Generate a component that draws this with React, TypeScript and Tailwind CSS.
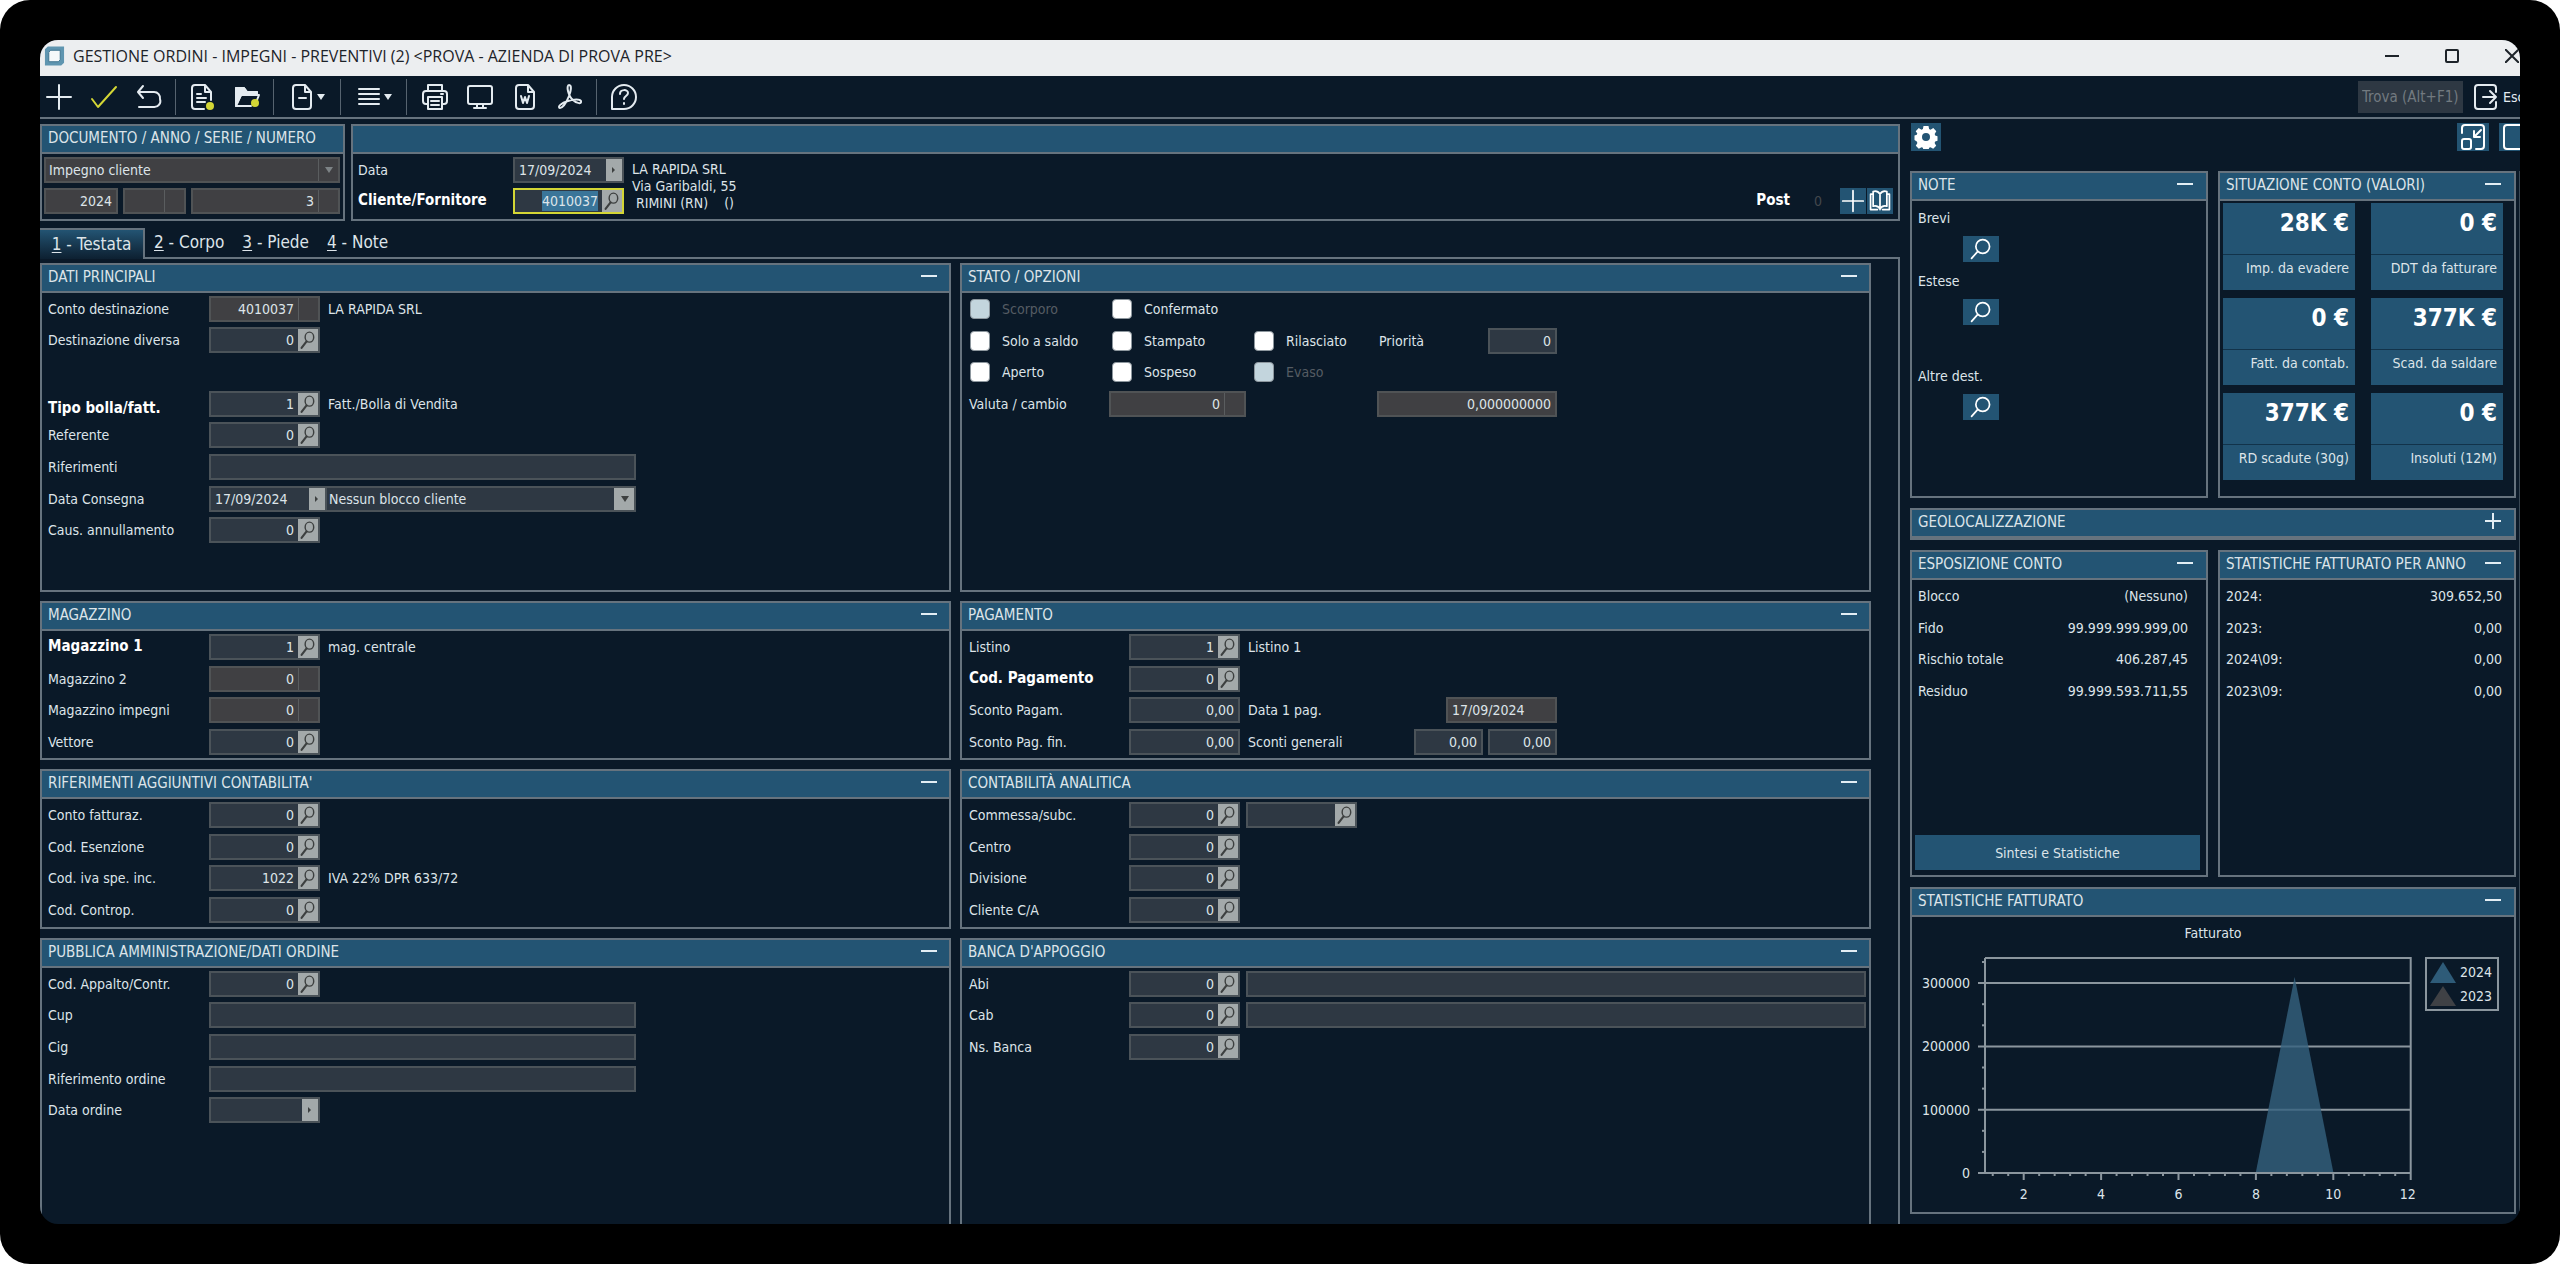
import { useEffect, useId, useRef } from "react";
import type { ReactNode } from "react";
import clsx from "clsx";

const YEARS = [
  { label: "2024:", value: "309.652,50" },
  { label: "2023:", value: "0,00" },
  { label: "2024\\09:", value: "0,00" },
  { label: "2023\\09:", value: "0,00" },
];

const EXPOSURE = [
  { label: "Blocco", value: "(Nessuno)" },
  { label: "Fido", value: "99.999.999.999,00" },
  { label: "Rischio totale", value: "406.287,45" },
  { label: "Residuo", value: "99.999.593.711,55" },
];

const TILES = [
  { value: "28K €", label: "Imp. da evadere" },
  { value: "0 €", label: "DDT da fatturare" },
  { value: "0 €", label: "Fatt. da contab." },
  { value: "377K €", label: "Scad. da saldare" },
  { value: "377K €", label: "RD scadute (30g)" },
  { value: "0 €", label: "Insoluti (12M)" },
];

const TABS = ["Testata", "Corpo", "Piede", "Note"];

function Svg({ children, className = "h-7 w-7" }: { children: ReactNode; className?: string }) {
  return (
    <svg
      viewBox="0 0 28 28"
      className={clsx("shrink-0", className)}
      fill="none"
      stroke="currentColor"
      strokeWidth="2"
      strokeLinecap="round"
      strokeLinejoin="round"
      aria-hidden="true"
    >
      {children}
    </svg>
  );
}

function Lens({ className }: { className?: string }) {
  return (
    <Svg className={className}>
      <ellipse cx="16" cy="10" rx="6" ry="7" />
      <path d="M12 16 5 25" strokeWidth="3" />
    </Svg>
  );
}

// Small square button glued to the right edge of a field.
function FieldButton({ kind, label }: { kind: "lens" | "date"; label: string }) {
  return (
    <button
      aria-label={label}
      className={clsx(
        "flex shrink-0 items-center justify-center bg-[#a3a9aa] text-[#3d4040]",
        kind === "lens" ? "w-5" : "w-4"
      )}
    >
      {kind === "lens" ? (
        <Lens className="h-5 w-5" />
      ) : (
        <svg viewBox="0 0 6 8" className="h-2 w-[6px]" fill="currentColor" aria-hidden="true">
          <path d="M1 1 4 4 1 7z" />
        </svg>
      )}
    </button>
  );
}

type FieldProps = {
  id?: string;
  name?: string;
  value?: string;
  kind?: "text" | "lens" | "date" | "locked" | "lockedText";
  left?: boolean;
  width?: string;
};

function Field({ id, name, value = "", kind = "text", left, width = "w-[111px]" }: FieldProps) {
  const locked = kind === "locked" || kind === "lockedText";
  return (
    <div
      className={clsx(
        "flex h-[26px] border-2",
        width,
        locked ? "border-[#505355] bg-[#404043]" : "border-[#4b5359] bg-[#2e3843]"
      )}
    >
      <input
        id={id}
        aria-label={name}
        defaultValue={value}
        readOnly={locked}
        className={clsx(
          "w-full min-w-0 flex-1 bg-transparent outline-none",
          left ? "pl-1 text-left" : "pr-1 text-right"
        )}
      />
      {kind === "lens" && <FieldButton kind="lens" label={`Cerca ${name ?? ""}`} />}
      {kind === "date" && <FieldButton kind="date" label={`Calendario ${name ?? ""}`} />}
      {kind === "locked" && <span className="w-5 shrink-0 border-l border-[#5a5d5f]" />}
    </div>
  );
}

// One line of the form: label, main field, then whatever follows it.
function Row({
  label,
  bold,
  low,
  labelWidth = "w-[161px]",
  children,
  ...field
}: FieldProps & {
  label: string;
  bold?: boolean;
  low?: boolean;
  labelWidth?: string;
  children?: ReactNode;
}) {
  const id = useId();
  return (
    <div className="flex items-center">
      <label
        htmlFor={id}
        className={clsx(
          "flex h-full shrink-0",
          labelWidth,
          low ? "items-end" : "items-center",
          bold && "text-[15px] font-bold text-white"
        )}
      >
        {label}
      </label>
      <Field id={id} name={label} {...field} />
      {children}
    </div>
  );
}

function Panel({
  title,
  className,
  closed,
  control = "pr-3",
  children,
}: {
  title: string;
  className?: string;
  closed?: boolean;
  control?: string;
  children?: ReactNode;
}) {
  return (
    <section className={clsx("flex flex-col border-2 border-[#66737e]", className)}>
      <header
        className={clsx(
          "flex h-[28px] shrink-0 items-center justify-between border-b-2 border-[#66737e] bg-[#235473] pl-[6px]",
          control
        )}
      >
        <h2 className="whitespace-nowrap text-[15px]">{title}</h2>
        <button aria-label={closed ? "Espandi" : "Riduci"} className="mb-1 text-[#e3eef4]">
          <svg viewBox="0 0 16 16" className="h-4 w-4" stroke="currentColor" strokeWidth="2" aria-hidden="true">
            <path d={closed ? "M0 8h16M8 0v16" : "M0 8h16"} />
          </svg>
        </button>
      </header>
      {children}
    </section>
  );
}

function Check({ label, disabled }: { label: string; disabled?: boolean }) {
  return (
    <label className={clsx("flex items-center gap-3", disabled && "text-[#555c63]")}>
      <input
        type="checkbox"
        disabled={disabled}
        className={clsx(
          "h-5 w-5 appearance-none rounded-[4px] border border-[#8d979e]",
          disabled ? "bg-[#c3d5dd]" : "bg-white"
        )}
      />
      {label}
    </label>
  );
}

function Toolbar() {
  const button = "flex h-full items-center";
  const sep = "h-9 w-px bg-[#56636f]";
  return (
    <div className="flex h-[43px] shrink-0 items-center justify-between border-b-2 border-[#66737e] text-[#e4ebf0]">
      <div className="flex h-full items-center pl-[5px]">
        <button aria-label="Nuovo" className={clsx(button, "mr-[17px]")}>
          <Svg><path d="M14 2v24M2 14h24" /></Svg>
        </button>
        <button aria-label="Conferma" className={clsx(button, "mr-[17px] text-[#d3d635]")}>
          <Svg><path d="m2 16 6 8L26 4" /></Svg>
        </button>
        <button aria-label="Ripristina" className={clsx(button, "mr-3")}>
          <Svg><path d="M8 3 3 9l5 6M3 9h16a6 6 0 0 1 6 7 6 6 0 0 1-6 8H4" /></Svg>
        </button>
        <span className={sep} />
        <button aria-label="Documento" className={clsx(button, "ml-3 mr-[17px]")}>
          <Svg>
            <path d="M16 26H7a3 3 0 0 1-3-3V5a3 3 0 0 1 3-3h10l6 7v8M17 2v7h6M9 11h4M9 15h9M9 19h8" />
            <circle cx="22" cy="23" r="4" fill="#d3d635" stroke="none" />
          </Svg>
        </button>
        <button aria-label="Apri cartella" className={clsx(button, "mr-3")}>
          <Svg>
            <path d="M3 23V5h8l3 4h10v3" />
            <path d="M3 5h8l3 4h10v3H8L4 20z" fill="currentColor" />
            <path d="m8 12-5 11h15M8 12h18l-2 5" />
            <circle cx="22" cy="20" r="4" fill="#d3d635" stroke="none" />
          </Svg>
        </button>
        <span className={sep} />
        <button aria-label="Azioni documento" className={clsx(button, "ml-[14px] mr-[15px]")}>
          <Svg><path d="M17 2H8a3 3 0 0 0-3 3v18a3 3 0 0 0 3 3h12a3 3 0 0 0 3-3V9zM17 2v7h6M11 15h7" /></Svg>
          <Caret />
        </button>
        <span className={sep} />
        <button aria-label="Menu" className={clsx(button, "ml-[14px] mr-[14px]")}>
          <Svg><path d="M4 6h20M4 11h20M4 16h20M4 21h20" /></Svg>
          <Caret />
        </button>
        <span className={sep} />
        <button aria-label="Stampa" className={clsx(button, "ml-[14px] mr-[17px]")}>
          <Svg>
            <path d="M7 8V2h14v6M7 21H5a3 3 0 0 1-3-3v-7a3 3 0 0 1 3-3h18a3 3 0 0 1 3 3v7a3 3 0 0 1-3 3h-2" />
            <path d="M7 14h14v12H7zM10 18h8M10 22h8M20 11h2" />
          </Svg>
        </button>
        <button aria-label="Anteprima" className={clsx(button, "mr-[17px]")}>
          <Svg><path d="M4 3h20a2 2 0 0 1 2 2v14a2 2 0 0 1-2 2H4a2 2 0 0 1-2-2V5a2 2 0 0 1 2-2zM11 21v4M17 21v4M8 25h12" /></Svg>
        </button>
        <button aria-label="Word" className={clsx(button, "mr-[17px]")}>
          <Svg>
            <path d="M17 2H8a3 3 0 0 0-3 3v18a3 3 0 0 0 3 3h12a3 3 0 0 0 3-3V9zM17 2v7h6" />
            <path d="m10 13 2 7 2-6 2 6 2-7" />
          </Svg>
        </button>
        <button aria-label="Pdf" className={clsx(button, "mr-3")}>
          <Svg>
            <path d="M13 2c3 0 2 6 0 11-2 5-6 12-9 12-3-1 1-5 8-7 6-2 12-2 13 0 1 3-4 3-8-1-5-4-7-15-4-15z" />
          </Svg>
        </button>
        <span className={sep} />
        <button aria-label="Aiuto" className={clsx(button, "ml-[13px]")}>
          <Svg>
            <path d="M2 26V14A12 12 0 1 1 14 26z" />
            <path d="M10 11c0-5 8-5 8-1 0 3-4 3-4 6M14 20v1" />
          </Svg>
        </button>
      </div>
      <div className="flex w-[162px] shrink-0 items-center overflow-hidden">
        <input
          aria-label="Trova"
          placeholder="Trova (Alt+F1)"
          className="h-8 w-[105px] shrink-0 bg-[#2e3843] px-1 text-[15px] outline-none placeholder:text-[#727a80]"
        />
        <button className="ml-[9px] flex items-center gap-[3px] whitespace-nowrap">
          <Svg>
            <path d="M24 9V5a3 3 0 0 0-3-3H6a3 3 0 0 0-3 3v18a3 3 0 0 0 3 3h15a3 3 0 0 0 3-3v-4M11 14h13M18 8l6 6-6 6" />
          </Svg>
          Esci
        </button>
      </div>
    </div>
  );
}

function Caret() {
  return (
    <svg viewBox="0 0 8 6" className="ml-px h-[6px] w-2" fill="currentColor" aria-hidden="true">
      <path d="M0 0h8L4 6z" />
    </svg>
  );
}

function Tile({ value, label }: { value: string; label: string }) {
  return (
    <button className="flex h-[87px] flex-col bg-[#235473] text-right">
      <span className="flex h-[52px] w-full justify-end border-b border-[#12334a] pr-[6px] pt-1 text-2xl font-bold text-white">
        {value}
      </span>
      <span className="w-full pr-[6px] pt-[3px]">{label}</span>
    </button>
  );
}

function NoteItem({ label, height }: { label: string; height: string }) {
  return (
    <div className={height}>
      <div className="h-[26px] leading-[26px]">{label}</div>
      <button aria-label={`Cerca ${label}`} className="ml-[45px] mt-[5px] flex h-[26px] w-9 items-center justify-center bg-[#235473] text-white">
        <Svg className="h-6 w-6">
          <ellipse cx="16" cy="11" rx="8" ry="8" />
          <path d="M10 17 3 25" />
        </Svg>
      </button>
    </div>
  );
}

function Chart() {
  // x: months 1..12, y: 0..340000
  const x = (m: number) => 73 + (m - 1) * 38.7;
  const y = (v: number) => 256 - v * 0.000633;
  const minorX = Array.from({ length: 27 }, (_, i) => 1.2 + i * 0.4).filter((m) => Math.abs(m % 2) > 0.01);
  const minorY = [1, 2, 4, 5, 7, 8, 10].map((n) => (n * 100000) / 3);
  return (
    <svg viewBox="0 0 602 294" className="w-full" aria-label="Fatturato">
      <g fill="#dde4e9" fontSize="14">
        <text x="301" y="21" textAnchor="middle">Fatturato</text>
        {[0, 100000, 200000, 300000].map((v) => (
          <text key={v} x="58" y={y(v) + 5} textAnchor="end">{v}</text>
        ))}
        {[2, 4, 6, 8, 10, 12].map((m) => (
          <text key={m} x={m === 12 ? x(m) - 3 : x(m)} y="282" textAnchor="middle">{m}</text>
        ))}
        <text x="548" y="60">2024</text>
        <text x="548" y="84">2023</text>
      </g>
      <g stroke="#8b969e" strokeWidth="2" fill="none">
        {[100000, 200000, 300000].map((v) => (
          <path key={v} d={`M66 ${y(v)}H${x(12)}`} />
        ))}
        <path d={`M73 41H${x(12)}V263M73 41V256M66 256H${x(12)}`} />
        {[2, 4, 6, 8, 10].map((m) => (
          <path key={m} d={`M${x(m)} 256v7`} />
        ))}
        {minorX.map((m) => (
          <path key={m} d={`M${x(m)} 256v3`} />
        ))}
        {minorY.map((v) => (
          <path key={v} d={`M70 ${y(v)}h3`} />
        ))}
        <rect x="514" y="41" width="72" height="52" />
      </g>
      <path d={`M${x(8)} 255 ${x(9)} ${y(309652)} ${x(10)} 255z`} fill="#34617e" fillOpacity="0.8" />
      <path d="M518 66 531 45 544 66z" fill="#2e5b78" />
      <path d="M518 89 531 69 544 89z" fill="#3f4145" />
    </svg>
  );
}

function Sidebar() {
  const blue = "flex h-[28px] items-center justify-center bg-[#235473] text-white";
  return (
    <aside className="flex w-[610px] shrink-0 flex-col pt-1">
      <div className="flex h-12 shrink-0 items-start justify-between">
        <button aria-label="Impostazioni" className={clsx(blue, "ml-px w-[30px]")}>
          <svg viewBox="0 0 24 24" className="h-6 w-6" fill="currentColor" fillRule="evenodd" aria-hidden="true">
            <path d="M9.5 1h5l.6 3 1.4.7 2.8-1.6 3 3.2-1.6 2.8.5 1.4 2.3.8v4.4l-2.3.8-.6 1.4 1.6 2.8-3 3.1-2.7-1.6-1.4.6-.6 2.8h-5l-.6-2.8-1.4-.6-2.7 1.6-3-3.1 1.6-2.8-.6-1.4L.5 15v-4.400l2.300-.8.5-1.400L1.700 6.300l3-3.200 2.800 1.600L8.900 4zM12 8a4 4 0 1 0 0 8 4 4 0 0 0 0-8z" />
          </svg>
        </button>
        <div className="flex w-[63px] gap-[10px] overflow-hidden">
          <button aria-label="Riduci finestra" className={clsx(blue, "w-8 shrink-0")}>
            <Svg>
              <path d="M3 10V5a3 3 0 0 1 3-3h16a3 3 0 0 1 3 3v18a3 3 0 0 1-3 3h-5M22 7l-7 7M15 8v6h6" />
              <rect x="3" y="16" width="9" height="10" rx="2" />
            </Svg>
          </button>
          <button aria-label="Pannello" className={clsx(blue, "w-8 shrink-0")}>
            <Svg><rect x="3" y="2" width="22" height="24" rx="3" /></Svg>
          </button>
        </div>
      </div>
      <div className="flex flex-1 flex-col gap-[10px] border-r border-[#3a4854] pr-[3px]">
        <div className="grid grid-cols-2 gap-[10px]">
          <Panel title="NOTE" className="h-[327px]" control="pr-[13px]">
            <div className="px-[6px] pt-1">
              <NoteItem label="Brevi" height="h-[63px]" />
              <NoteItem label="Estese" height="h-[95px]" />
              <NoteItem label="Altre dest." height="h-[63px]" />
            </div>
          </Panel>
          <Panel title="SITUAZIONE CONTO (VALORI)" className="h-[327px]" control="pr-[13px]">
            <div className="grid grid-cols-2 gap-x-4 gap-y-2 pl-[3px] pr-[11px] pt-[2px]">
              {TILES.map((t) => (
                <Tile key={t.label} {...t} />
              ))}
            </div>
          </Panel>
        </div>
        <Panel title="GEOLOCALIZZAZIONE" className="h-8" closed control="pr-[13px]" />
        <div className="grid grid-cols-2 gap-[10px]">
          <Panel title="ESPOSIZIONE CONTO" className="h-[327px]" control="pr-[13px]">
            <dl className="grid h-[127px] grid-rows-4 pl-[6px] pr-[18px]">
              {EXPOSURE.map((e) => (
                <div key={e.label} className="flex items-center justify-between">
                  <dt>{e.label}</dt>
                  <dd>{e.value}</dd>
                </div>
              ))}
            </dl>
            <button className="mb-[5px] ml-[3px] mr-[6px] mt-auto h-[35px] bg-[#235473]">Sintesi e Statistiche</button>
          </Panel>
          <Panel title="STATISTICHE FATTURATO PER ANNO" className="h-[327px]" control="pr-[13px]">
            <dl className="grid h-[127px] grid-rows-4 pl-[6px] pr-3">
              {YEARS.map((e) => (
                <div key={e.label} className="flex items-center justify-between">
                  <dt>{e.label}</dt>
                  <dd>{e.value}</dd>
                </div>
              ))}
            </dl>
          </Panel>
        </div>
        <Panel title="STATISTICHE FATTURATO" className="h-[327px]" control="pr-[13px]">
          <Chart />
        </Panel>
      </div>
    </aside>
  );
}

function DocumentHeader() {
  const customer = useRef<HTMLInputElement>(null);

  useEffect(() => {
    customer.current?.focus({ preventScroll: true });
    customer.current?.select();
  }, []);

  return (
    <div className="flex h-[97px] gap-[6px]">
      <section className="w-[305px] shrink-0 border-2 border-[#66737e]">
        <h2 className="flex h-[28px] items-center border-b-2 border-[#66737e] bg-[#235473] pl-[6px] text-[15px]">
          DOCUMENTO / ANNO / SERIE / NUMERO
        </h2>
        <div className="flex flex-col gap-[5px] pl-[2px] pr-[3px] pt-[3px]">
          <div className="flex h-[26px] border-2 border-[#505355] bg-[#404043]">
            <select aria-label="Tipo documento" className="min-w-0 flex-1 appearance-none bg-transparent pl-[3px] outline-none">
              <option>Impegno cliente</option>
            </select>
            <span className="flex w-5 items-center justify-center border-l border-[#5a5d5f] text-[#7d8386]">
              <Caret />
            </span>
          </div>
          <div className="flex gap-[5px]">
            <Field name="Anno" value="2024" kind="lockedText" width="w-[74px]" />
            <Field name="Serie" kind="locked" width="w-[63px]" />
            <Field name="Numero" value="3" kind="locked" width="flex-1 min-w-0" />
          </div>
        </div>
      </section>

      <section className="flex-1 border-2 border-[#66737e]">
        <div className="h-[28px] border-b-2 border-[#66737e] bg-[#235473]" />
        <div className="flex justify-between pl-[5px] pr-[5px] pt-[3px]">
          <div className="flex">
            <div className="flex flex-col gap-[5px]">
              <Row label="Data" labelWidth="w-[155px]" value="17/09/2024" kind="date" left />
              <div className="flex items-center">
                <label htmlFor="cliente" className="w-[155px] text-[15px] font-bold text-white">Cliente/Fornitore</label>
                <div className="flex h-[26px] w-[111px] border-2 border-[#d3d635] bg-[#2e3843]">
                  <input
                    id="cliente"
                    ref={customer}
                    defaultValue="4010037"
                    className="w-full min-w-0 flex-1 bg-transparent pr-1 text-right outline-none selection:bg-[#3a7599] selection:text-[#dde4e9]"
                  />
                  <FieldButton kind="lens" label="Cerca cliente" />
                </div>
              </div>
            </div>
            <address className="ml-2 flex flex-col pt-1 not-italic leading-[17px]">
              <span>LA RAPIDA SRL</span>
              <span>Via Garibaldi, 55</span>
              <span className="flex gap-4 pl-1">
                <span>RIMINI (RN)</span>
                <span>()</span>
              </span>
            </address>
          </div>
          <div className="flex h-[26px] items-center self-end">
            <span className="mr-6 text-[15px] font-bold text-white">Post</span>
            <span className="mr-[18px] text-[#43484d]">0</span>
            <button aria-label="Aggiungi" className="mr-px flex h-[26px] w-[26px] items-center justify-center bg-[#235473] text-white">
              <Svg className="h-6 w-6"><path d="M14 2v24M2 14h24" /></Svg>
            </button>
            <button aria-label="Rubrica" className="flex h-[26px] w-[26px] items-center justify-center bg-[#235473] text-white">
              <Svg className="h-6 w-6">
                <path d="M14 6v18M14 6c-2-3-5-4-8-3v17c3-1 6 0 8 3 2-3 5-4 8-3V3c-3-1-6 0-8 3M6 6H3v18h8M22 6h3v18h-8" />
              </Svg>
            </button>
          </div>
        </div>
      </section>
    </div>
  );
}

function MainForm() {
  const body = "grid shrink-0 pl-[6px] pr-1";
  const bodyRight = "grid shrink-0 pl-[7px] pr-[3px]";
  const right = "w-[160px]";
  const four = "h-[127px] grid-rows-4";
  return (
    <div className="grid flex-1 grid-cols-2 grid-rows-[329px_159px_160px_1fr] gap-[9px] pr-[27px] pt-1">
      <Panel title="DATI PRINCIPALI">
        <div className={clsx(body, "h-[253px] grid-rows-8")}>
          <Row label="Conto destinazione" value="4010037" kind="locked">
            <span className="ml-2">LA RAPIDA SRL</span>
          </Row>
          <Row label="Destinazione diversa" value="0" kind="lens" />
          <div />
          <Row label="Tipo bolla/fatt." bold low value="1" kind="lens">
            <span className="ml-2">Fatt./Bolla di Vendita</span>
          </Row>
          <Row label="Referente" value="0" kind="lens" />
          <Row label="Riferimenti" width="w-[427px]" />
          <Row label="Data Consegna" value="17/09/2024" kind="date" left width="w-[118px]">
            <div className="flex h-[26px] w-[309px] border-2 border-l-0 border-[#4b5359] bg-[#2e3843]">
              <select aria-label="Blocco cliente" className="min-w-0 flex-1 appearance-none bg-transparent pl-[2px] outline-none">
                <option>Nessun blocco cliente</option>
              </select>
              <span className="flex w-5 items-center justify-center bg-[#a3a9aa] text-[#3d4040]">
                <Caret />
              </span>
            </div>
          </Row>
          <Row label="Caus. annullamento" value="0" kind="lens" />
        </div>
      </Panel>

      <Panel title="STATO / OPZIONI">
        <div className={clsx(bodyRight, four)}>
          <div className="grid grid-cols-[142px_142px_125px] items-center pl-px">
            <Check label="Scorporo" disabled />
            <Check label="Confermato" />
          </div>
          <div className="grid grid-cols-[142px_142px_125px_auto] items-center justify-start pl-px">
            <Check label="Solo a saldo" />
            <Check label="Stampato" />
            <Check label="Rilasciato" />
            <Row label="Priorità" labelWidth="w-[109px]" width="w-[69px]" value="0" />
          </div>
          <div className="grid grid-cols-[142px_142px_125px] items-center pl-px">
            <Check label="Aperto" />
            <Check label="Sospeso" />
            <Check label="Evaso" disabled />
          </div>
          <Row label="Valuta / cambio" labelWidth="w-[140px]" width="w-[137px]" value="0" kind="locked">
            <div className="ml-[131px]">
              <Field name="Cambio" value="0,000000000" kind="lockedText" width="w-[180px]" />
            </div>
          </Row>
        </div>
      </Panel>

      <Panel title="MAGAZZINO">
        <div className={clsx(body, four)}>
          <Row label="Magazzino 1" bold value="1" kind="lens">
            <span className="ml-2">mag. centrale</span>
          </Row>
          <Row label="Magazzino 2" value="0" kind="locked" />
          <Row label="Magazzino impegni" value="0" kind="locked" />
          <Row label="Vettore" value="0" kind="lens" />
        </div>
      </Panel>

      <Panel title="PAGAMENTO">
        <div className={clsx(bodyRight, four)}>
          <Row label="Listino" labelWidth={right} value="1" kind="lens">
            <span className="ml-2">Listino 1</span>
          </Row>
          <Row label="Cod. Pagamento" labelWidth={right} bold value="0" kind="lens" />
          <Row label="Sconto Pagam." labelWidth={right} value="0,00">
            <div className="ml-2">
              <Row label="Data 1 pag." labelWidth="w-[198px]" value="17/09/2024" kind="lockedText" left />
            </div>
          </Row>
          <Row label="Sconto Pag. fin." labelWidth={right} value="0,00">
            <div className="ml-2 flex gap-[5px]">
              <Row label="Sconti generali" labelWidth="w-[166px]" value="0,00" width="w-[69px]" />
              <Field name="Secondo sconto" value="0,00" width="w-[69px]" />
            </div>
          </Row>
        </div>
      </Panel>

      <Panel title="RIFERIMENTI AGGIUNTIVI CONTABILITA'">
        <div className={clsx(body, four)}>
          <Row label="Conto fatturaz." value="0" kind="lens" />
          <Row label="Cod. Esenzione" value="0" kind="lens" />
          <Row label="Cod. iva spe. inc." value="1022" kind="lens">
            <span className="ml-2">IVA 22% DPR 633/72</span>
          </Row>
          <Row label="Cod. Controp." value="0" kind="lens" />
        </div>
      </Panel>

      <Panel title="CONTABILITÀ ANALITICA">
        <div className={clsx(bodyRight, four)}>
          <Row label="Commessa/subc." labelWidth={right} value="0" kind="lens">
            <div className="ml-[6px]">
              <Field name="Sottocommessa" kind="lens" />
            </div>
          </Row>
          <Row label="Centro" labelWidth={right} value="0" kind="lens" />
          <Row label="Divisione" labelWidth={right} value="0" kind="lens" />
          <Row label="Cliente C/A" labelWidth={right} value="0" kind="lens" />
        </div>
      </Panel>

      <Panel title="PUBBLICA AMMINISTRAZIONE/DATI ORDINE" className="border-b-0">
        <div className={clsx(body, "h-[158px] grid-rows-5")}>
          <Row label="Cod. Appalto/Contr." value="0" kind="lens" />
          <Row label="Cup" width="w-[427px]" />
          <Row label="Cig" width="w-[427px]" />
          <Row label="Riferimento ordine" width="w-[427px]" />
          <Row label="Data ordine" kind="date" />
        </div>
      </Panel>

      <Panel title="BANCA D'APPOGGIO" className="border-b-0">
        <div className={clsx(bodyRight, "h-[95px] grid-rows-3")}>
          <Row label="Abi" labelWidth={right} value="0" kind="lens">
            <div className="ml-[6px] flex-1">
              <Field name="Descrizione Abi" width="w-full" left />
            </div>
          </Row>
          <Row label="Cab" labelWidth={right} value="0" kind="lens">
            <div className="ml-[6px] flex-1">
              <Field name="Descrizione Cab" width="w-full" left />
            </div>
          </Row>
          <Row label="Ns. Banca" labelWidth={right} value="0" kind="lens" />
        </div>
      </Panel>
    </div>
  );
}

export default function App() {
  return (
    <div className="bg-white">
      <div className="flex min-h-screen flex-col rounded-[30px] bg-black p-10">
        <div className="flex flex-1 flex-col overflow-hidden rounded-[18px] bg-[#0a1928] font-['DejaVu_Sans_Condensed','Noto_Sans',sans-serif] text-sm text-[#dde4e9]">
          <div className="flex h-9 shrink-0 items-center justify-between bg-[#eceef0] pb-1 pl-1 font-['Open_Sans','Noto_Sans',sans-serif] text-base text-[#1d2329]">
            <div className="flex items-center gap-2">
              <svg viewBox="0 0 22 22" className="h-[22px] w-[21px]" aria-hidden="true">
                <path d="M4 1h17v17l-3 3H1V4z" fill="#5f95b0" />
                <path d="M7 5h10v10l-2 2H5V7z" fill="#f5f8fa" stroke="#3e738f" />
              </svg>
              <h1>GESTIONE ORDINI - IMPEGNI - PREVENTIVI (2) &lt;PROVA - AZIENDA DI PROVA PRE&gt;</h1>
            </div>
            <div className="flex w-[135px] items-center gap-[46px] overflow-hidden">
              <button aria-label="Riduci a icona" className="shrink-0">
                <svg viewBox="0 0 14 14" className="h-[14px] w-[14px]" stroke="currentColor" strokeWidth="2" aria-hidden="true"><path d="M0 7h14" /></svg>
              </button>
              <button aria-label="Ingrandisci" className="shrink-0">
                <svg viewBox="0 0 14 14" className="h-[14px] w-[14px]" stroke="currentColor" strokeWidth="2" fill="none" aria-hidden="true"><rect x="1" y="1" width="12" height="12" rx="1" /></svg>
              </button>
              <button aria-label="Chiudi" className="shrink-0">
                <svg viewBox="0 0 14 14" className="h-[14px] w-[14px]" stroke="currentColor" strokeWidth="2" aria-hidden="true"><path d="m0 0 14 14M14 0 0 14" /></svg>
              </button>
            </div>
          </div>

          <Toolbar />

          <div className="flex flex-1">
            <main className="flex min-w-0 flex-1 flex-col pr-[10px] pt-[5px]">
              <div className="pb-[7px]">
                <DocumentHeader />
              </div>
              <div className="flex h-[31px] text-[17px]" role="tablist">
                {TABS.map((tab, i) => (
                  <button
                    key={tab}
                    role="tab"
                    aria-selected={i === 0}
                    className={clsx(
                      "whitespace-nowrap",
                      i === 0
                        ? "w-[105px] border-r-2 border-t-2 border-[#66737e] bg-linear-to-b from-[#235473] to-[#0d2031]"
                        : "border-b-2 border-[#66737e] px-[9px]"
                    )}
                  >
                    <u className="underline-offset-2">{i + 1}</u> - {tab}
                  </button>
                ))}
                <span className="flex-1 border-b-2 border-[#66737e]" />
              </div>
              <div className="flex flex-1 flex-col border-r-2 border-[#66737e]">
                <MainForm />
              </div>
            </main>
            <Sidebar />
          </div>
        </div>
      </div>
    </div>
  );
}
